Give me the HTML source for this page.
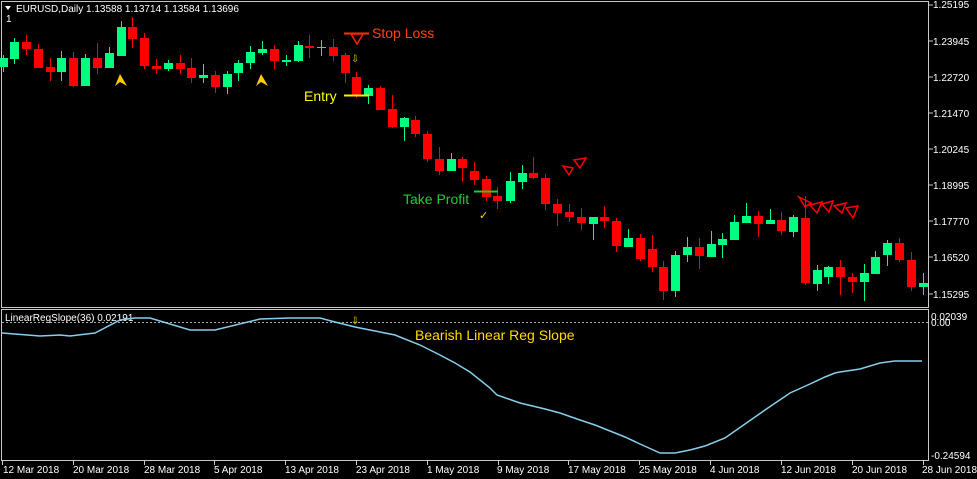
<!DOCTYPE html>
<html><head><meta charset="utf-8"><style>
html,body{margin:0;padding:0;background:#000;width:977px;height:479px;overflow:hidden}
svg{display:block}
text{font-family:"Liberation Sans",sans-serif}
</style></head><body>
<svg width="977" height="479" viewBox="0 0 977 479" xmlns="http://www.w3.org/2000/svg">
<rect width="977" height="479" fill="#000"/>
<!-- frames -->
<rect x="1.5" y="1.5" width="927" height="306" fill="none" stroke="#c8c8c8" stroke-width="1"/>
<rect x="1.5" y="309.5" width="927" height="151" fill="none" stroke="#c8c8c8" stroke-width="1"/>
<g font-size="10" fill="#fff">
<text x="16" y="12">EURUSD,Daily  1.13588 1.13714 1.13584 1.13696</text>
<text x="6" y="22">1</text>
</g>
<path d="M5 6 L11 6 L8 10 Z" fill="#fff"/>
<!-- price axis -->
<g font-size="10" fill="#fff">
<text x="933" y="8">1.25195</text>
<text x="933" y="45">1.23945</text>
<text x="933" y="81">1.22720</text>
<text x="933" y="117">1.21470</text>
<text x="933" y="153">1.20245</text>
<text x="933" y="189">1.18995</text>
<text x="933" y="225">1.17770</text>
<text x="933" y="261">1.16520</text>
<text x="933" y="298">1.15295</text>
<text x="931" y="320">0.02039</text>
<text x="931" y="326">0.00</text>
<text x="931" y="459">-0.24594</text>
</g>
<g stroke="#c8c8c8">
<path d="M929 5h4M929 41h4M929 77h4M929 113h4M929 149h4M929 185h4M929 221h4M929 257h4M929 294h4"/>
</g>
<!-- candles -->
<g id="c"></g>
<g stroke-width="1">
<path stroke="#00ff80" d="M3.5 55V72M14.5 38V64M61.5 51V81M85.5 54V86M109.5 47V68M121.5 21V56M168.5 60V71M203.5 64V83M227.5 71V94M238.5 60V81M250.5 46V69M262.5 41V55M286.5 55V66M298.5 41V62M321.5 40V56M368.5 85V104M404.5 117V141M451.5 153V171M510.5 172V203M522.5 165V189M593.5 217V240M628.5 229V247M675.5 251V297M687.5 237V262M711.5 231V257M722.5 233V258M734.5 215V240M746.5 203V223M770.5 209V224M793.5 215V237M817.5 265V291M828.5 266V284M864.5 264V301M875.5 251V274M887.5 240V266M923.5 273V295"/>
<path stroke="#ff0000" d="M26.5 35V55M38.5 44V68M50.5 58V81M73.5 52V87M97.5 43V74M132.5 17V48M144.5 33V69M156.5 59V74M180.5 55V74M191.5 58V83M215.5 71V93M274.5 45V69M309.5 35V58M333.5 39V61M345.5 53V83M356.5 72V98M380.5 86V110M392.5 95V128M415.5 116V137M427.5 131V162M439.5 147V175M462.5 157V182M474.5 162V185M486.5 176V201M497.5 187V209M533.5 157V179M545.5 174V210M557.5 199V226M569.5 204V222M581.5 208V230M604.5 206V228M616.5 218V252M640.5 234V261M652.5 235V272M663.5 261V300M699.5 238V269M758.5 211V237M781.5 212V235M805.5 196V285M840.5 260V295M852.5 273V293M899.5 238V262M911.5 252V291"/>
</g>
<g fill="#00ff80">
<rect x="0" y="58" width="8" height="9"/><rect x="10" y="42" width="9" height="17"/><rect x="57" y="58" width="9" height="14"/><rect x="81" y="58" width="9" height="28"/><rect x="105" y="53" width="9" height="15"/><rect x="117" y="27" width="9" height="29"/><rect x="164" y="63" width="9" height="6"/><rect x="199" y="75" width="9" height="3"/><rect x="223" y="74" width="9" height="13"/><rect x="234" y="63" width="9" height="10"/><rect x="246" y="52" width="9" height="11"/><rect x="258" y="49" width="9" height="4"/><rect x="282" y="60" width="9" height="2"/><rect x="294" y="45" width="9" height="16"/><rect x="317" y="47" width="9" height="1"/><rect x="364" y="88" width="9" height="8"/><rect x="400" y="118" width="9" height="9"/><rect x="447" y="159" width="9" height="12"/><rect x="506" y="181" width="9" height="20"/><rect x="518" y="173" width="9" height="9"/><rect x="589" y="217" width="9" height="7"/><rect x="624" y="238" width="9" height="9"/><rect x="671" y="255" width="9" height="36"/><rect x="683" y="247" width="9" height="8"/><rect x="707" y="244" width="9" height="13"/><rect x="718" y="239" width="9" height="6"/><rect x="730" y="222" width="9" height="18"/><rect x="742" y="216" width="9" height="7"/><rect x="766" y="220" width="9" height="4"/><rect x="789" y="217" width="9" height="15"/><rect x="813" y="270" width="9" height="14"/><rect x="824" y="267" width="9" height="10"/><rect x="860" y="273" width="9" height="9"/><rect x="871" y="257" width="9" height="17"/><rect x="883" y="243" width="9" height="12"/><rect x="919" y="283" width="9" height="4"/>
</g>
<g fill="#ff0000">
<rect x="22" y="42" width="9" height="7"/><rect x="34" y="49" width="9" height="19"/><rect x="46" y="67" width="9" height="5"/><rect x="69" y="58" width="9" height="28"/><rect x="93" y="58" width="9" height="10"/><rect x="128" y="27" width="9" height="12"/><rect x="140" y="38" width="9" height="28"/><rect x="152" y="66" width="9" height="3"/><rect x="176" y="63" width="9" height="6"/><rect x="187" y="68" width="9" height="10"/><rect x="211" y="75" width="9" height="12"/><rect x="270" y="49" width="9" height="12"/><rect x="305" y="46" width="9" height="2"/><rect x="329" y="47" width="9" height="9"/><rect x="341" y="55" width="9" height="18"/><rect x="352" y="77" width="9" height="18"/><rect x="376" y="88" width="9" height="22"/><rect x="388" y="109" width="9" height="18"/><rect x="411" y="120" width="9" height="14"/><rect x="423" y="134" width="9" height="25"/><rect x="435" y="159" width="9" height="12"/><rect x="458" y="159" width="9" height="9"/><rect x="470" y="171" width="9" height="9"/><rect x="482" y="179" width="9" height="18"/><rect x="493" y="196" width="9" height="5"/><rect x="529" y="173" width="9" height="5"/><rect x="541" y="178" width="9" height="26"/><rect x="553" y="204" width="9" height="9"/><rect x="565" y="212" width="9" height="5"/><rect x="577" y="217" width="9" height="6"/><rect x="600" y="217" width="9" height="4"/><rect x="612" y="221" width="9" height="25"/><rect x="636" y="238" width="9" height="21"/><rect x="648" y="249" width="9" height="18"/><rect x="659" y="267" width="9" height="24"/><rect x="695" y="247" width="9" height="9"/><rect x="754" y="216" width="9" height="8"/><rect x="777" y="220" width="9" height="11"/><rect x="801" y="218" width="9" height="65"/><rect x="836" y="267" width="9" height="10"/><rect x="848" y="277" width="9" height="5"/><rect x="895" y="243" width="9" height="17"/><rect x="907" y="260" width="9" height="27"/>
</g>
<!-- annotations -->
<path d="M344 33.5h25" stroke="#ff3300" stroke-width="2"/>
<path d="M351 34 L363 34 L357 44 Z" fill="none" stroke="#ff2000" stroke-width="1.5"/>
<text x="372" y="38" font-size="14" fill="#ff4400">Stop Loss</text>
<path d="M344 95.5h25" stroke="#ffee00" stroke-width="2"/>
<text x="304" y="101" font-size="14" fill="#ffff00">Entry</text>
<path d="M474 191.5h24" stroke="#22cc22" stroke-width="2"/>
<text x="403" y="204" font-size="14" fill="#22cc33">Take Profit</text>
<text x="479" y="219" font-size="11" fill="#ffdd00">✓</text>
<text x="351" y="62" font-size="10" fill="#ffcc00">⇩</text>
<path d="M115 86 L120 74 L127 86 L120 82 Z" fill="#ffcc00"/>
<path d="M256 86 L261 74 L268 86 L261 82 Z" fill="#ffcc00"/>
<g fill="none" stroke="#ff0000" stroke-width="1.5">
<path d="M563 166 L573 168 L569 175 Z M574 160 L586 158 L580 168 Z"/>
<path d="M799 197 L811 203 L805 207 Z M810 205 L822 202 L817 213 Z M822 204 L833 201 L829 212 Z M834 206 L846 203 L842 213 Z M846 208 L858 206 L853 218 Z"/>
</g>
<!-- indicator -->
<text x="5" y="321" font-size="10" fill="#fff">LinearRegSlope(36) 0.02191</text>
<path d="M2 322.5H928" stroke="#aaa" stroke-dasharray="2,2" stroke-width="1"/>
<text x="351" y="324" font-size="10" fill="#ffcc00">⇩</text>
<text x="415" y="340" font-size="14" fill="#ffdd00">Bearish Linear Reg Slope</text>
<polyline fill="none" stroke="#87ceeb" stroke-width="1.5" points="2,333 40,336 60,335 70,336 95,333 120,320 135,318 150,318 190,330 215,330 260,319 290,318 320,318 335,322 355,327 370,330 395,335 420,345 440,355 455,363 470,372 490,388 497,395 520,403 545,409 560,413 580,420 595,425 610,431 625,437 640,444 660,453 675,453 690,450 705,446 725,438 745,424 765,410 790,393 810,384 825,377 835,373 840,372 860,369 880,363 895,361 922,361"/>
<!-- date axis -->
<g stroke="#c8c8c8"><path d="M2.5 461v4M73.5 461v4M144.5 461v4M214.5 461v4M285.5 461v4M356.5 461v4M427.5 461v4M498.5 461v4M568.5 461v4M639.5 461v4M710.5 461v4M781.5 461v4M852.5 461v4M923.5 461v4"/></g>
<g font-size="10" fill="#fff">
<text x="3" y="473">12 Mar 2018</text><text x="73" y="473">20 Mar 2018</text><text x="144" y="473">28 Mar 2018</text><text x="214" y="473">5 Apr 2018</text><text x="285" y="473">13 Apr 2018</text><text x="356" y="473">23 Apr 2018</text><text x="427" y="473">1 May 2018</text><text x="497" y="473">9 May 2018</text><text x="568" y="473">17 May 2018</text><text x="639" y="473">25 May 2018</text><text x="710" y="473">4 Jun 2018</text><text x="781" y="473">12 Jun 2018</text><text x="852" y="473">20 Jun 2018</text><text x="922" y="473">28 Jun 2018</text>
</g>
</svg>
</body></html>
